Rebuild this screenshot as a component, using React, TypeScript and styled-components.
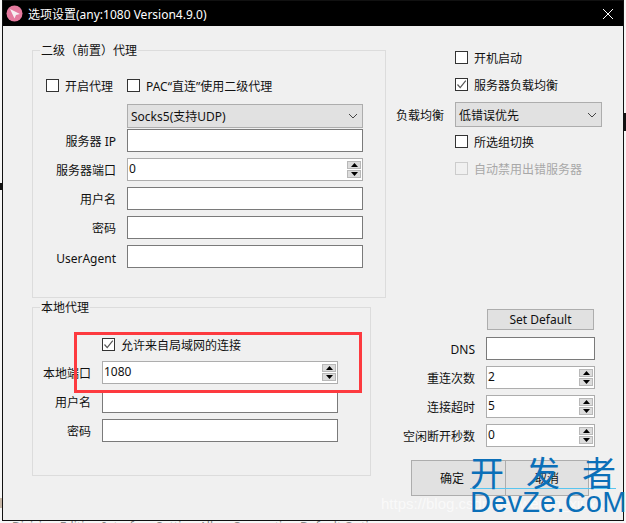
import React from "react";
import styled, { createGlobalStyle } from "styled-components";

const Global = createGlobalStyle`
  html, body { margin: 0; padding: 0; background: #f6f6f6; }
  body { width: 626px; height: 523px; overflow: hidden; font-family: "Noto Sans", "Noto Sans CJK SC", sans-serif; }
`;

const Stage = styled.div`
  position: relative;
  width: 626px;
  height: 523px;
  overflow: hidden;
  padding-left: 2px;
  box-sizing: border-box;
`;
const Backdrop = styled.div<{ $x: number; $y: number; $w: number; $h: number; $c: string }>`
  position: absolute;
  left: ${(p) => p.$x}px;
  top: ${(p) => p.$y}px;
  width: ${(p) => p.$w}px;
  height: ${(p) => p.$h}px;
  background: ${(p) => p.$c};
`;
const BackdropText = styled.div`
  position: absolute;
  left: 12px;
  top: 518px;
  font: 12px "Noto Sans", "Noto Sans CJK SC", sans-serif;
  color: #888;
  white-space: nowrap;
`;
const Window = styled.div`
  position: relative;
  width: 622px;
  height: 521px;
  box-sizing: border-box;
  border: 1px solid #111;
  background: #f0f0f0;
  display: flex;
  flex-direction: column;
`;
const TitleBar = styled.div`
  height: 25px;
  flex: none;
  background: #000;
  display: flex;
  align-items: center;
  padding: 0 9px 0 3px;
  color: #fff;
  font-size: 12px;
  gap: 5px;
`;
const TitleText = styled.span`
  flex: 1;
  white-space: nowrap;
`;
const Client = styled.div`
  flex: 1;
  display: flex;
  padding: 0 0 0 29px;
`;
const LeftCol = styled.div`
  width: 354px;
  padding-top: 24px;
  flex: none;
`;
const RightCol = styled.div`
  flex: 1;
  padding-top: 24px;
`;
const Group = styled.div<{ $w: number; $h: number; $pt: number; $mb?: number }>`
  position: relative;
  box-sizing: border-box;
  width: ${(p) => p.$w}px;
  height: ${(p) => p.$h}px;
  margin-bottom: ${(p) => p.$mb ?? 0}px;
  padding-top: ${(p) => p.$pt}px;
  border: 1px solid #dcdcdc;
`;
const Legend = styled.span`
  position: absolute;
  left: 7px;
  top: -8px;
  padding: 0 1px;
  background: #f0f0f0;
  font-size: 12px;
  line-height: 16px;
  color: #111;
  white-space: nowrap;
`;
const Field = styled.div<{ $label: number; $mb?: number }>`
  display: grid;
  grid-template-columns: ${(p) => p.$label}px 236px;
  column-gap: 11px;
  align-items: center;
  margin-bottom: ${(p) => p.$mb ?? 6}px;
`;
const Label = styled.label<{ $pt?: number }>`
  text-align: right;
  font-size: 12px;
  line-height: 16px;
  color: #111;
  white-space: nowrap;
  padding-top: ${(p) => p.$pt ?? 2}px;
`;
const CheckRow = styled.div<{ $mb?: number; $indent?: number; $disabled?: boolean }>`
  display: flex;
  align-items: center;
  gap: 6px;
  height: 13px;
  margin-left: ${(p) => p.$indent ?? 0}px;
  margin-bottom: ${(p) => p.$mb ?? 0}px;
  font-size: 12px;
  color: ${(p) => (p.$disabled ? "#a8a8a8" : "#111")};
  white-space: nowrap;
`;
const Box = styled.span<{ $disabled?: boolean }>`
  width: 13px;
  height: 13px;
  flex: none;
  box-sizing: border-box;
  border: 1px solid ${(p) => (p.$disabled ? "#cccccc" : "#333")};
  background: ${(p) => (p.$disabled ? "#f0f0f0" : "#fff")};
  display: flex;
  align-items: center;
  justify-content: center;
`;
const TextInput = styled.div<{ $w?: number }>`
  box-sizing: border-box;
  width: ${(p) => p.$w ?? 236}px;
  height: 23px;
  border: 1px solid #7a7a7a;
  background: #fff;
`;
const SpinBox = styled.div<{ $w?: number }>`
  box-sizing: border-box;
  width: ${(p) => p.$w ?? 236}px;
  height: 23px;
  border: 1px solid #adadad;
  background: #fff;
  display: flex;
  align-items: center;
  justify-content: space-between;
  padding: 0 1px 0 1px;
  font-size: 12px;
  color: #111;
`;
const SpinValue = styled.span`
  line-height: 16px;
  margin-top: -2px;
`;
const SpinBtns = styled.span`
  display: flex;
  flex-direction: column;
  gap: 1px;
`;
const SpinBtn = styled.span`
  width: 14px;
  height: 8px;
  box-sizing: border-box;
  background: #dcdcdc;
  border: 1px solid #b8b8b8;
  display: flex;
  align-items: center;
  justify-content: center;
`;
const Select = styled.div<{ $w: number; $h: number }>`
  box-sizing: border-box;
  width: ${(p) => p.$w}px;
  height: ${(p) => p.$h}px;
  border: 1px solid #adadad;
  background: #e1e1e1;
  display: flex;
  align-items: center;
  justify-content: space-between;
  padding: 0 4px 0 3px;
  font-size: 12px;
  color: #111;
`;
const RightTop = styled.div`
  display: flex;
  flex-direction: column;
  margin-left: 69px;
  padding-top: 1px;
`;
const SelectRow = styled.div`
  display: flex;
  align-items: center;
  margin-left: -59px;
  gap: 11px;
  margin-bottom: 8px;
`;
const RightBottom = styled.div`
  margin-top: 134px;
  margin-left: 10px;
  display: flex;
  flex-direction: column;
`;
const SetDefault = styled.button`
  box-sizing: border-box;
  width: 107px;
  height: 21px;
  margin: 0 0 7px 91px;
  padding: 0;
  border: 1px solid #adadad;
  background: #e1e1e1;
  font: 12px "Noto Sans", "Noto Sans CJK SC", sans-serif;
  color: #111;
`;
const NetRow = styled.div`
  display: grid;
  grid-template-columns: 79px 109px;
  column-gap: 11px;
  align-items: center;
  margin-bottom: 6px;
`;
const Actions = styled.div`
  display: flex;
  margin: 7px 0 0 15px;
`;
const ActionBtn = styled.button<{ $w: number; $pr?: number }>`
  box-sizing: border-box;
  width: ${(p) => p.$w}px;
  height: 36px;
  padding: 0 ${(p) => p.$pr ?? 0}px 0 0;
  border: 1px solid #adadad;
  background: #e1e1e1;
  font: 12px "Noto Sans", "Noto Sans CJK SC", sans-serif;
  color: #111;
  & + & { margin-left: -1px; }
`;
const Highlight = styled.div`
  position: absolute;
  left: 74px;
  top: 332px;
  width: 288px;
  height: 61px;
  box-sizing: border-box;
  border: 3px solid #fd3a3f;
  pointer-events: none;
`;
const Mark = styled.div`
  position: absolute;
  left: 470px;
  top: 453px;
  width: 146px;
  color: #0b6fb8;
  pointer-events: none;
`;
const MarkCn = styled.div`
  display: flex;
  justify-content: space-between;
  font: 34px/38px "Noto Sans CJK SC", sans-serif;
  height: 35px;
`;
const MarkLine = styled.div`
  height: 1px;
  background: #59c5ef;
`;
const MarkEn = styled.div`
  font: 29px/26px "Liberation Sans", sans-serif;
  letter-spacing: 0.2px;
  white-space: nowrap;
`;
const Url = styled.div`
  position: absolute;
  left: 381px;
  top: 495px;
  font: 15px/18px "Liberation Sans", sans-serif;
  color: rgba(255, 255, 255, 0.65);
  white-space: nowrap;
  pointer-events: none;
`;

const Tick = () => (
  <svg width="11" height="11" viewBox="0 0 11 11">
    <path d="M1.5 5.5 L4.2 8.6 L9.8 1.6" fill="none" stroke="#555" strokeWidth="1.2" />
  </svg>
);
const Chevron = () => (
  <svg width="10" height="6" viewBox="0 0 10 6">
    <path d="M1 1 L5 5 L9 1" fill="none" stroke="#444" strokeWidth="1" />
  </svg>
);
const Check = ({ text, checked, disabled, mb, indent }: { text: string; checked?: boolean; disabled?: boolean; mb?: number; indent?: number }) => (
  <CheckRow $mb={mb} $indent={indent} $disabled={disabled}>
    <Box $disabled={disabled}>{checked && <Tick />}</Box>
    <span>{text}</span>
  </CheckRow>
);
const Spin = ({ value, w }: { value: string; w?: number }) => (
  <SpinBox $w={w}>
    <SpinValue>{value}</SpinValue>
    <SpinBtns>
      <SpinBtn>
        <svg width="7" height="4" viewBox="0 0 7 4"><path d="M3.5 0 L7 4 H0 Z" fill="#000" /></svg>
      </SpinBtn>
      <SpinBtn>
        <svg width="7" height="4" viewBox="0 0 7 4"><path d="M0 0 H7 L3.5 4 Z" fill="#000" /></svg>
      </SpinBtn>
    </SpinBtns>
  </SpinBox>
);

export default function App() {
  return (
    <Stage>
      <Global />
      <Backdrop $x={624} $y={113} $w={2} $h={18} $c="#111" />
      <Backdrop $x={0} $y={183} $w={2} $h={7} $c="#111" />
      <Backdrop $x={0} $y={498} $w={2} $h={10} $c="#c8b8a8" />
      <BackdropText>Division Edition Interface Setting Allow Connection Default Options</BackdropText>
      <Window>
        <TitleBar>
          <svg width="17" height="17" viewBox="0 0 17 17">
            <circle cx="8.5" cy="8.5" r="8" fill="#e57a9f" />
            <path d="M4 4 L14 9 L10 10 L8.5 13.5 Z" fill="#f6eef2" />
          </svg>
          <TitleText>选项设置(any:1080 Version4.9.0)</TitleText>
          <svg width="12" height="12" viewBox="0 0 12 12">
            <path d="M1 1 L11 11 M11 1 L1 11" stroke="#fff" strokeWidth="1" />
          </svg>
        </TitleBar>
        <Client>
          <LeftCol>
            <Group $w={354} $h={248} $pt={28} $mb={9}>
              <Legend>二级（前置）代理</Legend>
              <Field $label={83} $mb={12}>
                <Check text="开启代理" indent={13} />
                <Check text="PAC“直连”使用二级代理" />
              </Field>
              <Field $label={83} $mb={1}>
                <span />
                <Select $w={236} $h={24}>
                  <span>Socks5(支持UDP)</span>
                  <Chevron />
                </Select>
              </Field>
              <Field $label={83}><Label>服务器 IP</Label><TextInput /></Field>
              <Field $label={83}><Label>服务器端口</Label><Spin value="0" /></Field>
              <Field $label={83}><Label>用户名</Label><TextInput /></Field>
              <Field $label={83}><Label>密码</Label><TextInput /></Field>
              <Field $label={83}><Label $pt={5}>UserAgent</Label><TextInput /></Field>
            </Group>
            <Group $w={339} $h={169} $pt={30}>
              <Legend>本地代理</Legend>
              <Field $label={58} $mb={10}>
                <span />
                <Check text="允许来自局域网的连接" checked />
              </Field>
              <Field $label={58}><Label>本地端口</Label><Spin value="1080" /></Field>
              <Field $label={58}><Label>用户名</Label><TextInput /></Field>
              <Field $label={58}><Label>密码</Label><TextInput /></Field>
            </Group>
          </LeftCol>
          <RightCol>
            <RightTop>
              <Check text="开机启动" mb={14} />
              <Check text="服务器负载均衡" checked mb={11} />
              <SelectRow>
                <Label>负载均衡</Label>
                <Select $w={147} $h={25}>
                  <span>低错误优先</span>
                  <Chevron />
                </Select>
              </SelectRow>
              <Check text="所选组切换" mb={14} />
              <Check text="自动禁用出错服务器" disabled />
            </RightTop>
            <RightBottom>
              <SetDefault>Set Default</SetDefault>
              <NetRow><Label>DNS</Label><TextInput $w={109} /></NetRow>
              <NetRow><Label>重连次数</Label><Spin value="2" w={109} /></NetRow>
              <NetRow><Label>连接超时</Label><Spin value="5" w={109} /></NetRow>
              <NetRow><Label>空闲断开秒数</Label><Spin value="0" w={109} /></NetRow>
              <Actions>
                <ActionBtn $w={95} $pr={13}>确定</ActionBtn>
                <ActionBtn $w={84}>取消</ActionBtn>
              </Actions>
            </RightBottom>
          </RightCol>
        </Client>
      </Window>
      <Highlight />
      <Url>https://blog.csdn.net/weixin_xiuxiu</Url>
      <Mark>
        <MarkCn><span>开</span><span>发</span><span>者</span></MarkCn>
        <MarkLine />
        <MarkEn>DevZe.CoM</MarkEn>
      </Mark>
    </Stage>
  );
}
